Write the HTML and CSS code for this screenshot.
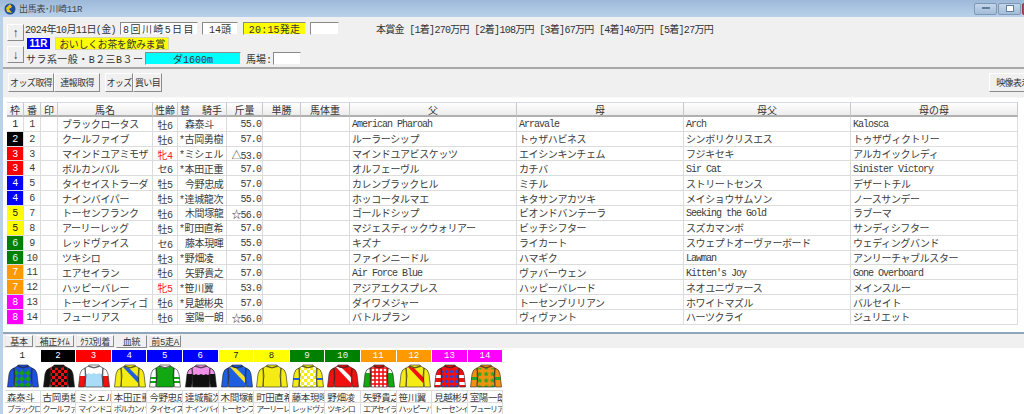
FILE: index.html
```html
<!DOCTYPE html>
<html lang="ja">
<head>
<meta charset="utf-8">
<title>出馬表・川崎11R</title>
<link rel="stylesheet" href="styles.css">
</head>
<body>
<svg class="defs" aria-hidden="true">
  <defs>
    <path id="bod" d="M10.5 2Q16 5 21.5 2L25 4 24.5 23H7.5L7 4Z"/>
    <path id="slv" d="M7 4Q3 5 2 10L.5 23H6.5L8 12ZM25 4Q29 5 30 10L31.5 23H25.5L24 12Z"/>
    <path id="col" d="M11 1H21L21.5 2.5Q16 5.5 10.5 2.5Z"/>
    <clipPath id="cb"><use href="#bod"/></clipPath>
    <clipPath id="cs"><use href="#slv"/></clipPath>
    <pattern id="p1" width="6" height="6" patternUnits="userSpaceOnUse"><path d="M3 0 6 3 3 6 0 3Z" fill="#12a012"/></pattern>
    <pattern id="p2" width="6" height="6" patternUnits="userSpaceOnUse"><path d="M0 0H3V3H0ZM3 3H6V6H3Z" fill="#111"/></pattern>
    <pattern id="p9" width="6" height="6" patternUnits="userSpaceOnUse"><path d="M0 0H3V3H0ZM3 3H6V6H3Z" fill="#fff"/></pattern>
    <pattern id="p11" width="4" height="4" patternUnits="userSpaceOnUse"><rect width="2.4" height="2.4" x=".8" y=".8" fill="#fff"/></pattern>
    <pattern id="p13" width="5" height="5" patternUnits="userSpaceOnUse"><circle cx="2.5" cy="2.5" r="1.6" fill="#2244ee"/></pattern>
    <pattern id="p14" width="6.5" height="6.5" patternUnits="userSpaceOnUse"><path d="M3.2.6 4 2.5 6 2.6 4.5 3.9 5 5.9 3.2 4.8 1.4 5.9 1.9 3.9.4 2.6 2.4 2.5Z" fill="#22aa22"/></pattern>
  </defs>
</svg>
<div class="window">
  <header class="titlebar">
    <svg class="appicon" viewBox="0 0 12 12"><circle cx="6" cy="6" r="5.5" fill="#1b4f9c"/><path d="M2 5 6 1 8 4 5 6 8 10 3 9Z" fill="#f2c21a"/></svg>
    <span class="titletext">出馬表･川崎11R</span>
    <div class="winbtns">
      <span class="winbtn"><svg width="8" height="3"><rect width="8" height="2" fill="#5f7f9f"/></svg></span>
      <span class="winbtn"><svg width="8" height="7"><rect x=".5" y=".5" width="7" height="6" fill="#fff" stroke="#5f7f9f"/></svg></span>
      <span class="winbtn close"></span>
    </div>
  </header>
  <div class="client">
    <section class="top">
      <div class="arrows">
        <button class="btn arrow">↑</button>
        <button class="btn arrow">↓</button>
      </div>
      <div class="info">
        <div class="inforow">
          <span class="date">2024年10月11日(金)</span>
          <span class="box meet">8回川崎5日目</span>
          <span class="box heads">14頭</span>
          <span class="box start">20:15発走</span>
          <span class="box blank"></span>
          <span class="prize">本賞金 [1着]270万円 [2着]108万円 [3着]67万円 [4着]40万円 [5着]27万円</span>
        </div>
        <div class="inforow">
          <span class="raceno">11R</span>
          <span class="racename">おいしくお茶を飲みま賞</span>
        </div>
        <div class="inforow">
          <span class="cond">サラ系一般・B２三B３ー</span>
          <span class="box course">ダ1600m</span>
          <span class="baba">馬場:</span>
          <span class="box babaval"></span>
        </div>
      </div>
    </section>
    <nav class="toolbar">
      <button class="btn tool w46">オッズ取得</button>
      <button class="btn tool w46">連報取得</button>
      <button class="btn tool w28 sep">オッズ</button>
      <button class="btn tool w29">買い目</button>
      <button class="btn tool video">映像表示</button>
    </nav>
    <main class="tablearea">
      <table class="entries">
        <thead><tr>
          <th>枠</th><th>番</th><th>印</th><th>馬名</th><th>性齢</th><th class="jh">替 &nbsp;騎手</th><th>斤量</th><th>単勝</th><th>馬体重</th><th>父</th><th>母</th><th>母父</th><th>母の母</th>
        </tr></thead>
        <tbody>
          <tr><td class="c w1">1</td><td class="c">1</td><td></td><td>ブラックロータス</td><td class="c">牡6</td><td class="jk">森泰斗</td><td class="r">55.0</td><td></td><td></td><td class="lat">American Pharoah</td><td class="lat">Arravale</td><td class="lat">Arch</td><td class="lat">Kalosca</td></tr>
          <tr><td class="c w2">2</td><td class="c">2</td><td></td><td>クールファイブ</td><td class="c">牡6</td><td class="jm">*古岡勇樹</td><td class="r">57.0</td><td></td><td></td><td>ルーラーシップ</td><td>トゥザハビネス</td><td>シンボリクリスエス</td><td>トゥザヴィクトリー</td></tr>
          <tr><td class="c w3">3</td><td class="c">3</td><td></td><td>マインドユアミモザ</td><td class="c fem">牝4</td><td class="jm">*ミシェル</td><td class="r">△53.0</td><td></td><td></td><td>マインドユアビスケッツ</td><td>エイシンキンチェム</td><td>フジキセキ</td><td>アルカイックレディ</td></tr>
          <tr><td class="c w3">3</td><td class="c">4</td><td></td><td>ボルカンバル</td><td class="c">セ6</td><td class="jm">*本田正重</td><td class="r">57.0</td><td></td><td></td><td>オルフェーヴル</td><td>カチバ</td><td class="lat">Sir Cat</td><td class="lat">Sinister Victory</td></tr>
          <tr><td class="c w4">4</td><td class="c">5</td><td></td><td>タイセイストラーダ</td><td class="c">牡5</td><td class="jk">今野忠成</td><td class="r">57.0</td><td></td><td></td><td>カレンブラックヒル</td><td>ミチル</td><td>ストリートセンス</td><td>デザートチル</td></tr>
          <tr><td class="c w4">4</td><td class="c">6</td><td></td><td>ナインバイパー</td><td class="c">牡5</td><td class="jm">*達城龍次</td><td class="r">55.0</td><td></td><td></td><td>ホッコータルマエ</td><td>キタサンアカツキ</td><td>メイショウサムソン</td><td>ノースサンデー</td></tr>
          <tr><td class="c w5">5</td><td class="c">7</td><td></td><td>トーセンフランク</td><td class="c">牡6</td><td class="jk">木間塚龍</td><td class="r">☆56.0</td><td></td><td></td><td>ゴールドシップ</td><td>ビオンドバンテーラ</td><td class="lat">Seeking the Gold</td><td>ラブーマ</td></tr>
          <tr><td class="c w5">5</td><td class="c">8</td><td></td><td>アーリーレッグ</td><td class="c">牡5</td><td class="jm">*町田直希</td><td class="r">57.0</td><td></td><td></td><td>マジェスティックウォリアー</td><td>ビッチシフター</td><td>スズカマンボ</td><td>サンディシフター</td></tr>
          <tr><td class="c w6">6</td><td class="c">9</td><td></td><td>レッドヴァイス</td><td class="c">セ6</td><td class="jk">藤本現暉</td><td class="r">55.0</td><td></td><td></td><td>キズナ</td><td>ライカート</td><td>スウェプトオーヴァーボード</td><td>ウェディングバンド</td></tr>
          <tr><td class="c w6">6</td><td class="c">10</td><td></td><td>ツキシロ</td><td class="c">牡3</td><td class="jm">*野畑凌</td><td class="r">57.0</td><td></td><td></td><td>ファインニードル</td><td>ハマギク</td><td class="lat">Lawman</td><td>アンリーチャブルスター</td></tr>
          <tr><td class="c w7">7</td><td class="c">11</td><td></td><td>エアセイラン</td><td class="c">牡6</td><td class="jk">矢野貴之</td><td class="r">57.0</td><td></td><td></td><td class="lat">Air Force Blue</td><td>ヴァバーウェン</td><td class="lat">Kitten's Joy</td><td class="lat">Gone Overboard</td></tr>
          <tr><td class="c w7">7</td><td class="c">12</td><td></td><td>ハッピーバレー</td><td class="c fem">牝5</td><td class="jm">*笹川翼</td><td class="r">53.0</td><td></td><td></td><td>アジアエクスプレス</td><td>ハッピーバレード</td><td>ネオユニヴァース</td><td>メインスルー</td></tr>
          <tr><td class="c w8">8</td><td class="c">13</td><td></td><td>トーセンインディゴ</td><td class="c">牡6</td><td class="jm">*見越彬央</td><td class="r">57.0</td><td></td><td></td><td>ダイワメジャー</td><td>トーセンブリリアン</td><td>ホワイトマズル</td><td>バルセイト</td></tr>
          <tr><td class="c w8">8</td><td class="c">14</td><td></td><td>フューリアス</td><td class="c">牡6</td><td class="jk">室陽一朗</td><td class="r">☆56.0</td><td></td><td></td><td>バトルプラン</td><td>ヴィヴァント</td><td>ハーツクライ</td><td>ジュリエット</td></tr>
        </tbody>
      </table>
    </main>
    <div class="splitter"></div>
    <div class="tabs">
      <span class="tab t28">基本</span>
      <span class="tab t39">補正ﾀｲﾑ</span>
      <span class="tab t38">ｸﾗｽ別着</span>
      <span class="tab t31 active">血統</span>
      <span class="tab t32">前5走A</span>
    </div>
    <section class="silks">
      <div class="card"><div class="num w1">1</div><svg class="silk" viewBox="0 0 32 24"><use href="#slv" fill="#1d4fe0"/><use href="#bod" fill="#1d4fe0"/><rect x="7" y="5" width="18" height="19" fill="url(#p1)" clip-path="url(#cb)"/><use href="#col" fill="#1d4fe0"/><use class="ln" href="#slv"/><use class="ln" href="#bod"/><use class="ln" href="#col"/></svg><div class="nm">森泰斗</div><div class="hs">ブラックロータス</div></div>
      <div class="card"><div class="num w2">2</div><svg class="silk" viewBox="0 0 32 24"><use href="#slv" fill="#111"/><use href="#bod" fill="#f01010"/><rect x="7" y="1" width="18" height="23" fill="url(#p2)" clip-path="url(#cb)"/><use href="#col" fill="#111"/><use class="ln" href="#slv"/><use class="ln" href="#bod"/><use class="ln" href="#col"/></svg><div class="nm">古岡勇樹</div><div class="hs">クールファイブ</div></div>
      <div class="card"><div class="num w3">3</div><svg class="silk" viewBox="0 0 32 24"><use href="#slv" fill="#fff"/><rect x="0" y="12" width="32" height="12" fill="#f01010" clip-path="url(#cs)"/><use href="#bod" fill="#a8dcf8"/><path d="M7 2H25V9Q23 11 21 9 19 11 16 9 13 11 11 9 9 11 7 9Z" fill="#fff" clip-path="url(#cb)"/><use href="#col" fill="#fff"/><use class="ln" href="#slv"/><use class="ln" href="#bod"/><use class="ln" href="#col"/></svg><div class="nm">ミシェル</div><div class="hs">マインドユアミモザ</div></div>
      <div class="card"><div class="num w4">4</div><svg class="silk" viewBox="0 0 32 24"><use href="#slv" fill="#f4ec14"/><use href="#bod" fill="#f4ec14"/><path d="M9 3 12 1 25 14 24 19Z" fill="#1d5fe0" clip-path="url(#cb)"/><use href="#col" fill="#f4ec14"/><use class="ln" href="#slv"/><use class="ln" href="#bod"/><use class="ln" href="#col"/></svg><div class="nm">本田正重</div><div class="hs">ボルカンバル</div></div>
      <div class="card"><div class="num w4">5</div><svg class="silk" viewBox="0 0 32 24"><use href="#slv" fill="#fff"/><path d="M0 13H32V15H0ZM0 17H32V19H0Z" fill="#12a812" clip-path="url(#cs)"/><use href="#bod" fill="#12a812"/><use href="#col" fill="#fff"/><use class="ln" href="#slv"/><use class="ln" href="#bod"/><use class="ln" href="#col"/></svg><div class="nm">今野忠成</div><div class="hs">タイセイストラーダ</div></div>
      <div class="card"><div class="num w4">6</div><svg class="silk" viewBox="0 0 32 24"><use href="#slv" fill="#111"/><path d="M7 3 0 10H32L25 3Z" fill="#f090e8" clip-path="url(#cs)"/><use href="#bod" fill="#111"/><path d="M7 2H25V10Q23 12 21 10 19 12 16 10 13 12 11 10 9 12 7 10Z" fill="#f090e8" clip-path="url(#cb)"/><use href="#col" fill="#f090e8"/><use class="ln" href="#slv"/><use class="ln" href="#bod"/><use class="ln" href="#col"/></svg><div class="nm">達城龍次</div><div class="hs">ナインバイパー</div></div>
      <div class="card"><div class="num w5">7</div><svg class="silk" viewBox="0 0 32 24"><use href="#slv" fill="#1d5fe0"/><use href="#bod" fill="#1d5fe0"/><path d="M9 3 12 1 25 14 24 19Z" fill="#f4e030" clip-path="url(#cb)"/><use href="#col" fill="#1d5fe0"/><use class="ln" href="#slv"/><use class="ln" href="#bod"/><use class="ln" href="#col"/></svg><div class="nm">木間塚龍</div><div class="hs">トーセンフランク</div></div>
      <div class="card"><div class="num w5">8</div><svg class="silk" viewBox="0 0 32 24"><use href="#slv" fill="#f4ec14"/><use href="#bod" fill="#f4ec14"/><use href="#col" fill="#f4ec14"/><use class="ln" href="#slv"/><use class="ln" href="#bod"/><use class="ln" href="#col"/></svg><div class="nm">町田直希</div><div class="hs">アーリーレッグ</div></div>
      <div class="card"><div class="num w6">9</div><svg class="silk" viewBox="0 0 32 24"><use href="#slv" fill="#f4ec14"/><path d="M0 14H32V16H0Z" fill="#1d5fe0" clip-path="url(#cs)"/><use href="#bod" fill="#f4ec14"/><rect x="7" y="1" width="18" height="23" fill="url(#p9)" clip-path="url(#cb)"/><use href="#col" fill="#f4ec14"/><use class="ln" href="#slv"/><use class="ln" href="#bod"/><use class="ln" href="#col"/></svg><div class="nm">藤本現暉</div><div class="hs">レッドヴァイス</div></div>
      <div class="card"><div class="num w6">10</div><svg class="silk" viewBox="0 0 32 24"><use href="#slv" fill="#f01010"/><use href="#bod" fill="#f01010"/><path d="M9 3 12 1 25 14 24 19Z" fill="#fff" clip-path="url(#cb)"/><use href="#col" fill="#f01010"/><use class="ln" href="#slv"/><use class="ln" href="#bod"/><use class="ln" href="#col"/></svg><div class="nm">野畑凌</div><div class="hs">ツキシロ</div></div>
      <div class="card"><div class="num w7">11</div><svg class="silk" viewBox="0 0 32 24"><use href="#slv" fill="#12a812"/><rect x="0" y="0" width="32" height="9" fill="#fff" clip-path="url(#cs)"/><use href="#bod" fill="#f01010"/><rect x="7" y="1" width="18" height="23" fill="url(#p11)" clip-path="url(#cb)"/><use href="#col" fill="#f01010"/><use class="ln" href="#slv"/><use class="ln" href="#bod"/><use class="ln" href="#col"/></svg><div class="nm">矢野貴之</div><div class="hs">エアセイラン</div></div>
      <div class="card"><div class="num w7">12</div><svg class="silk" viewBox="0 0 32 24"><use href="#slv" fill="#f4ec14"/><use href="#bod" fill="#f4ec14"/><path d="M9 3 12 1 25 14 24 19Z" fill="#f01010" clip-path="url(#cb)"/><use href="#col" fill="#f4ec14"/><use class="ln" href="#slv"/><use class="ln" href="#bod"/><use class="ln" href="#col"/></svg><div class="nm">笹川翼</div><div class="hs">ハッピーバレー</div></div>
      <div class="card"><div class="num w8">13</div><svg class="silk" viewBox="0 0 32 24"><use href="#slv" fill="#f01010"/><path d="M0 11H32V14H0ZM0 18H32V21H0Z" fill="#fff" clip-path="url(#cs)"/><use href="#bod" fill="#f01010"/><rect x="7" y="6" width="18" height="18" fill="url(#p13)" clip-path="url(#cb)"/><use href="#col" fill="#f01010"/><use class="ln" href="#slv"/><use class="ln" href="#bod"/><use class="ln" href="#col"/></svg><div class="nm">見越彬央</div><div class="hs">トーセンインディゴ</div></div>
      <div class="card"><div class="num w8">14</div><svg class="silk" viewBox="0 0 32 24"><use href="#slv" fill="#f49010"/><path d="M0 13H32V16H0Z" fill="#22aa22" clip-path="url(#cs)"/><use href="#bod" fill="#f49010"/><rect x="7" y="4" width="18" height="20" fill="url(#p14)" clip-path="url(#cb)"/><use href="#col" fill="#f49010"/><use class="ln" href="#slv"/><use class="ln" href="#bod"/><use class="ln" href="#col"/></svg><div class="nm">室陽一朗</div><div class="hs">フューリアス</div></div>
    </section>
  </div>
</div>
</body>
</html>
```

FILE: styles.css
```css
* { box-sizing: border-box; }
html, body { margin: 0; padding: 0; width: 1024px; height: 414px; overflow: hidden; }
body {
  font-family: "Liberation Mono", "Noto Sans CJK JP", monospace;
  font-size: 10px;
  color: #333;
  background: #f0f0f0;
}
.defs { display: block; width: 0; height: 0; }
.window { width: 1024px; height: 414px; display: flex; flex-direction: column; background: #b9d1ea; }

.titlebar {
  height: 17px; display: flex; align-items: center; padding-left: 4px; flex: none;
  background: linear-gradient(#9db9d9, #b9d1ea);
}
.appicon { width: 12px; height: 12px; margin-right: 3px; }
.titletext { font-size: 9px; letter-spacing: -.3px; color: #444; }
.winbtns { margin-left: auto; display: flex; gap: 1px; margin-right: -21px; }
.winbtn {
  width: 23px; height: 12px; display: flex; align-items: center; justify-content: center;
  background: linear-gradient(#c4d6ea, #a3bcd8); border: 1px solid #7d97b5; border-radius: 2px;
}
.winbtn.close { background: #b04a4a; border-color: #8c3a3a; }

.client { flex: 1; margin-left: 3px; display: flex; flex-direction: column; background: #f0f0f0; min-height: 0; }

.top { height: 52px; flex: none; display: flex; padding: 5px 0 0 4px; border-bottom: 2px solid #a8a8a8; }
.arrows { width: 17px; display: flex; flex-direction: column; gap: 5px; margin-top: 2px; }
.btn {
  font: inherit; color: #333; padding: 0; margin: 0; background: #f0f0f0;
  border: 1px solid; border-color: #fff #8a8a8a #8a8a8a #fff; white-space: nowrap; overflow: hidden;
}
.arrow { height: 17px; font-size: 12px; font-family: "Liberation Sans", sans-serif; }
.info { margin-left: 1px; display: flex; flex-direction: column; gap: 2px; flex: 1; }
.inforow { display: flex; align-items: center; height: 13px; white-space: nowrap; }
.date { width: 95px; letter-spacing: -.65px; }
.box {
  height: 13px; display: flex; align-items: center; justify-content: center; background: #fff;
  border: 1px solid; border-color: #8a8a8a #f0f0f0 #f0f0f0 #8a8a8a;
}
.meet { width: 78px; margin-right: 4px; letter-spacing: 1.4px; }
.heads { width: 36px; margin-right: 5px; }
.start { width: 63px; margin-right: 4px; background: #ffff00; letter-spacing: .2px; }
.blank { width: 29px; margin-right: 37px; }
.prize { font-size: 10px; letter-spacing: -.7px; }
.raceno {
  width: 23px; height: 11px; margin-left: 2px; background: #0000ff; color: #fff; font-weight: 700;
  display: flex; align-items: center; justify-content: center;
  font-family: "Liberation Sans", sans-serif; font-size: 10px;
}
.racename {
  width: 114px; height: 13px; margin-left: 5px; background: #ffff00; display: flex; align-items: center; justify-content: center;
  border: 1px solid #d8d8a0; letter-spacing: -.4px;
}
.cond { width: 120px; padding-left: 1px; letter-spacing: .45px; }
.course { width: 96px; margin-right: 5px; background: #00ffff; }
.baba { width: 27px; }
.babaval { width: 28px; }

.toolbar { height: 28px; flex: none; display: flex; align-items: flex-start; padding: 4px 0 0 5px; }
.tool { height: 19px; font-size: 9px; letter-spacing: -.6px; }
.w46 { width: 46px; }
.w28 { width: 28px; }
.w29 { width: 29px; }
.sep { margin-left: 5px; }
.video { width: 48px; margin-left: auto; margin-right: -13px; }

.tablearea { height: 235px; flex: none; background: #fff; padding: 5px 0 0 4px; border-top: 1px solid #f8f8f8; }
.entries {
  display: grid; width: 1011px; border-collapse: collapse;
  grid-template-columns: 17px 17px 17px 95px 25px 49px 36px 38px 49px 167px 167px 167px 167px;
  grid-auto-rows: 14.86px; margin-top: -1px;
}
.entries thead, .entries tbody, .entries tr { display: contents; }
.entries th {
  height: 15px; font-weight: 400; font-size: 10px; display: flex; align-items: center; justify-content: center;
  background: linear-gradient(#fff, #ececec); border-right: 1px solid #c8c8c8; border-bottom: 2px solid #b0b0b0; border-top: 1px solid #d0dcea;
}
.entries th.jh { justify-content: flex-start; padding-left: 2px; }
.entries td {
  display: flex; align-items: center; padding: 0 0 0 2px; overflow: hidden; white-space: nowrap;
  border-right: 1px solid #dcdcdc; border-bottom: 1px solid #dcdcdc; letter-spacing: -.4px; color: #3c3c3c;
}
.entries td:nth-child(4) { padding-left: 4px; }
.entries td.c { justify-content: center; padding: 1px 0 0; }
.entries td.r { justify-content: flex-end; padding: 2px 1px 0 0; letter-spacing: -.9px; }
.entries td.lat { letter-spacing: -1px; font-size: 10px; padding-top: 2px; }
.entries td.jk { padding-left: 7px; }
.entries td.jm { padding-left: 1px; }
.entries td.fem { color: #ff2020; }

.w1 { background: #fff; color: #222 !important; }
.w2 { background: #000; color: #fff !important; }
.w3 { background: #ff0000; color: #fff !important; }
.w4 { background: #0000ff; color: #fff !important; }
.w5 { background: #ffff00; color: #222 !important; }
.w6 { background: #008000; color: #e8f8e8 !important; }
.w7 { background: #ff9900; color: #fff !important; }
.w8 { background: #ff00ff; color: #fff !important; }

.splitter { height: 2px; flex: none; background: #8fa5bd; }
.tabs { height: 14px; flex: none; display: flex; align-items: flex-start; padding: 1px 0 0 2px; gap: 2px; }
.tab {
  height: 12px; display: flex; align-items: center; justify-content: center; font-size: 9px; letter-spacing: -.3px;
  background: #f0f0f0; border: 1px solid; border-color: #fff #8a8a8a #8a8a8a #e8e8e8; white-space: nowrap; overflow: hidden;
}
.t28 { width: 28px; }
.t39 { width: 39px; }
.t38 { width: 38px; }
.t31 { width: 31px; }
.t32 { width: 32px; }
.tab.active { height: 13px; margin-top: 0; border-color: #f0f0f0 #8a8a8a #8a8a8a #f0f0f0; }

.silks { flex: 1; background: #fff; display: grid; grid-template-columns: repeat(14, 35.6px); padding: 2px 0 0 2px; min-height: 0; overflow: hidden; }
.card { width: 35.6px; overflow: hidden; display: flex; flex-direction: column; }
.num { height: 12px; flex: none; display: flex; align-items: center; justify-content: center; font-size: 9px; border-right: 1px solid #fff; }
.silk { width: 32px; height: 24px; flex: none; margin: 2px 0 2px 2px; }
.ln { fill: none; stroke: #222; stroke-width: .6; }
.nm, .hs { height: 12px; flex: none; white-space: nowrap; overflow: hidden; display: flex; align-items: center; border: solid #dcdcdc; border-width: 1px 1px 0 0; padding-left: 2px; color: #3c3c3c; }
.nm { font-size: 9.5px; letter-spacing: -.4px; }
.hs { font-size: 8px; letter-spacing: -1.2px; }
```
